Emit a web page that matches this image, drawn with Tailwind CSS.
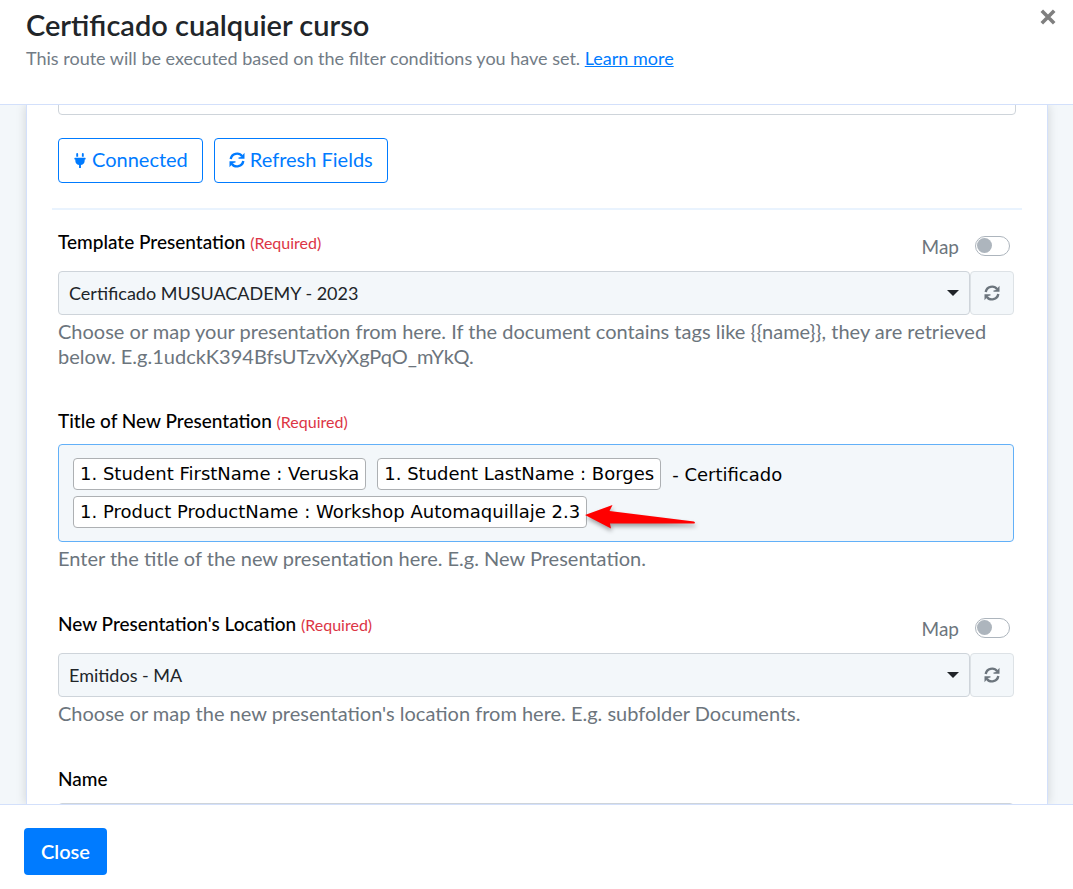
<!DOCTYPE html>
<html lang="en">
<head>
  <meta charset="UTF-8" />
  <meta name="viewport" content="width=device-width, initial-scale=1.0" />
  <title>Certificado cualquier curso</title>
  <script src="https://cdn.jsdelivr.net/npm/@tailwindcss/browser@4"></script>
</head>
<body class="bg-white font-['Lato',sans-serif] text-[19px] leading-[25px] text-black">

  <!-- Shared icons -->
  <svg class="hidden">
    <symbol id="icon-refresh" viewBox="0 0 16 16">
      <path fill="none" stroke="currentColor" stroke-width="2.400" d="M1.700 7A6.400 6.400 0 0 1 13.200 4.300M14.300 9A6.400 6.400 0 0 1 2.800 11.700" />
      <path fill="currentColor" d="M15.500 .8V6.800H9.500V5.400L12 5ZM.5 15.200V9.200H6.500V10.600L4 11Z" />
    </symbol>
  </svg>

  <div class="flex h-screen flex-col overflow-hidden">

    <!-- Header -->
    <header class="flex h-[105px] shrink-0 items-start justify-between border-b border-[#d3e0fb] pr-4 pl-[26px]">
      <div class="pt-[9px]">
        <h1 class="text-[29px] leading-8 font-semibold text-[#212529]">Certificado cualquier curso</h1>
        <p class="mt-[5px] text-[18px] text-[#727c86]">This route will be executed based on the filter conditions you have set. <a href="#" class="text-[#007bff] underline">Learn more</a></p>
      </div>
      <button type="button" aria-label="Close dialog" class="mt-2 p-px text-[#7f7f7f]">
        <svg class="size-4" viewBox="0 0 16 16" fill="none" stroke="currentColor" stroke-width="3.6"><path d="M1.8 1.8 14.2 14.2M14.2 1.8 1.8 14.2" /></svg>
      </button>
    </header>

    <!-- Body -->
    <main class="min-h-0 flex-1 overflow-hidden bg-[#f3f7fa] pr-[25px] pl-[26px]">
      <div class="h-full overflow-hidden border-x border-[#d3e0fb] bg-white px-[31px] shadow-[0_0_10px_rgba(0,0,0,0.15)]">
        <input type="text" aria-label="Connection" class="-mt-[34px] block h-11 w-full rounded border border-[#ced4da] bg-white px-3" />

        <div class="mt-[23px] flex gap-[11px]">
          <button type="button" class="flex h-[45px] items-center gap-[6px] rounded border border-[#007bff] pr-[14px] pb-[3px] pl-[15px] text-[20px] text-[#007bff]">
            <svg class="mt-[2px] h-[15px] w-3" viewBox="0 0 384 512" fill="currentColor"><path d="M320 32a32 32 0 0 0-64 0v96h64zm48 128H16a16 16 0 0 0-16 16v32a16 16 0 0 0 16 16h16v32a160.070 160.070 0 0 0 128 156.800V512h64v-99.200A160.070 160.070 0 0 0 352 256v-32h16a16 16 0 0 0 16-16v-32a16 16 0 0 0-16-16zM128 32a32 32 0 0 0-64 0v96h64z" /></svg>
            Connected
          </button>
          <button type="button" class="flex h-[45px] items-center gap-[5px] rounded border border-[#007bff] px-[14px] pb-[3px] text-[20px] text-[#007bff]">
            <svg class="mt-[2px] size-4"><use href="#icon-refresh" /></svg>
            Refresh Fields
          </button>
        </div>

        <hr class="-mx-[6px] mt-[25px] border-t-2 border-[#e9f3fe]" />

        <form class="pt-[19px] pr-[2px]">
          <!-- Template -->
          <div class="mb-[39px]">
            <div class="flex h-[42px] items-start justify-between">
              <label for="template" class="font-medium">Template Presentation <span class="text-base leading-none font-normal text-[#dc3545]">(Required)</span></label>
              <label class="flex items-center gap-4 pt-[3px] pr-1 text-[#6c757d]">
                <span class="pt-[2px]">Map</span>
                <input type="checkbox" class="peer sr-only" />
                <span class="flex h-5 w-[35px] items-center rounded-full border border-[#adb5bd] bg-white px-px peer-checked:justify-end"><span class="size-[15px] rounded-full bg-[#adb5bd]"></span></span>
              </label>
            </div>
            <div class="flex">
              <div class="relative flex-1">
                <select id="template" class="h-11 w-full appearance-none rounded border border-[#ced4da] bg-[#f3f7fa] px-[10px] text-[18px] text-[#212529]">
                  <option>Certificado MUSUACADEMY - 2023</option>
                </select>
                <span class="pointer-events-none absolute top-[19px] right-[11px] border-x-6 border-t-6 border-x-transparent border-t-[#212529]"></span>
              </div>
              <button type="button" aria-label="Refresh templates" class="flex h-11 w-11 items-center justify-center rounded border border-[#dde2e6] bg-[#f3f7fa] text-[#6c757d]">
                <svg class="size-4"><use href="#icon-refresh" /></svg>
              </button>
            </div>
            <p class="mt-1 text-[20px] text-[#6c757d]">Choose or map your presentation from here. If the document contains tags like {{name}}, they are retrieved below. E.g.1udckK394BfsUTzvXyXgPqO_mYkQ.</p>
          </div>

          <!-- Title -->
          <div class="mb-10">
            <div class="h-9">
              <span id="titleLabel" class="font-medium">Title of New Presentation <span class="text-base leading-none font-normal text-[#dc3545]">(Required)</span></span>
            </div>
            <div class="relative">
              <div role="textbox" contenteditable="true" aria-labelledby="titleLabel" class="flex h-[98px] flex-wrap content-start items-center gap-x-[11px] gap-y-[6px] rounded border border-[#62b0f8] bg-[#f3f7fa] px-[14px] py-[13px] font-['DejaVu_Sans',sans-serif] text-[18px]">
                <span class="flex h-8 items-center rounded border border-[#adb0b3] bg-white px-[6px] pb-px">1. Student FirstName : Veruska</span>
                <span class="flex h-8 items-center rounded border border-[#adb0b3] bg-white px-[6px] pb-px">1. Student LastName : Borges</span>
                <span>- Certificado</span>
                <span class="flex h-8 items-center rounded border border-[#adb0b3] bg-white px-[6px] pb-px">1. Product ProductName : Workshop Automaquillaje 2.3</span>
              </div>
              <svg class="pointer-events-none absolute top-[54px] left-[522px] h-10 w-[130px] drop-shadow-[1px_3px_2px_rgba(0,0,0,0.35)]" viewBox="0 0 130 40" fill="#ff0000"><path d="M5 17 32.500 7 29.500 13 114 23.500Q116 25 114 25.500L30 25.500 31 30.500Z" /></svg>
            </div>
            <p class="mt-1 text-[20px] text-[#6c757d]">Enter the title of the new presentation here. E.g. New Presentation.</p>
          </div>

          <!-- Location -->
          <div class="mb-10">
            <div class="flex h-[42px] items-start justify-between">
              <label for="location" class="font-medium">New Presentation's Location <span class="text-base leading-none font-normal text-[#dc3545]">(Required)</span></label>
              <label class="flex items-center gap-4 pt-[3px] pr-1 text-[#6c757d]">
                <span class="pt-[2px]">Map</span>
                <input type="checkbox" class="peer sr-only" />
                <span class="flex h-5 w-[35px] items-center rounded-full border border-[#adb5bd] bg-white px-px peer-checked:justify-end"><span class="size-[15px] rounded-full bg-[#adb5bd]"></span></span>
              </label>
            </div>
            <div class="flex">
              <div class="relative flex-1">
                <select id="location" class="h-11 w-full appearance-none rounded border border-[#ced4da] bg-[#f3f7fa] px-[10px] text-[18px] text-[#212529]">
                  <option>Emitidos - MA</option>
                </select>
                <span class="pointer-events-none absolute top-[19px] right-[11px] border-x-6 border-t-6 border-x-transparent border-t-[#212529]"></span>
              </div>
              <button type="button" aria-label="Refresh locations" class="flex h-11 w-11 items-center justify-center rounded border border-[#dde2e6] bg-[#f3f7fa] text-[#6c757d]">
                <svg class="size-4"><use href="#icon-refresh" /></svg>
              </button>
            </div>
            <p class="mt-1 text-[20px] text-[#6c757d]">Choose or map the new presentation's location from here. E.g. subfolder Documents.</p>
          </div>

          <!-- Name -->
          <div>
            <label for="name" class="block pb-3 font-medium">Name</label>
            <input type="text" id="name" class="h-11 w-full rounded border border-[#ced4da] bg-[#f3f7fa] px-3" />
          </div>
        </form>
      </div>
    </main>

    <!-- Footer -->
    <footer class="h-[85px] shrink-0 border-t border-[#d3e0fb] px-6 pt-[23px]">
      <button type="button" class="h-[47px] rounded bg-[#007bff] px-[17px] text-[20px] font-semibold text-white">Close</button>
    </footer>
  </div>

</body>
</html>
